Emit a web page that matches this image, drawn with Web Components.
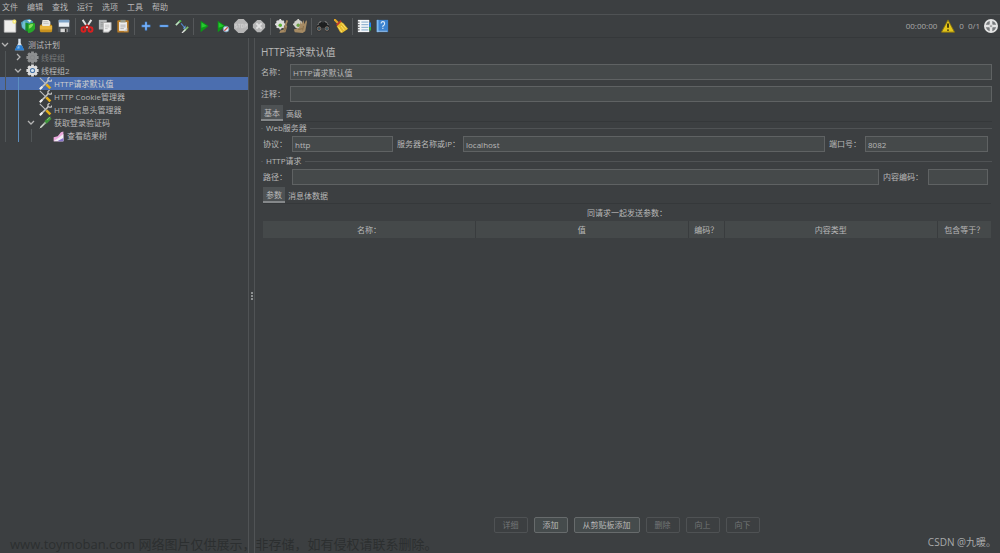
<!DOCTYPE html>
<html lang="zh-CN">
<head>
<meta charset="utf-8">
<title>HTTP请求默认值</title>
<style>
body{margin:0;background:#3c3f41;color:#b8b8b8;font:8px/12px "Open Sans","Noto Sans CJK SC",sans-serif;
--field:#45494a;--edge:#5f6263;--line:#505355;--dark:#35383a}
</style>
</head>
<body>
<jm-app></jm-app>
<script>
const define=(name,html,setup)=>{
  const t=document.createElement('template');
  t.innerHTML='<style>*{box-sizing:border-box}button,input{font:inherit;color:inherit;margin:0}</style>'+html;
  customElements.define(name,class extends HTMLElement{
    connectedCallback(){
      if(this.shadowRoot)return;
      this.attachShadow({mode:'open'}).append(t.content.cloneNode(true));
      if(setup)setup(this,this.shadowRoot);
    }
  });
};

const gear=(c,hole,mid)=>`<g fill="${c}"><circle cx="8" cy="8" r="6"/><path d="M6.3 .5h3.400v15H6.300zM.5 6.300h15v3.400H.5z"/><path d="M6.300 .5h3.400v15H6.300zM.5 6.300h15v3.400H.5z" transform="rotate(45 8 8)"/></g><circle cx="8" cy="8" r="3.200" fill="${hole}"/><circle cx="8" cy="8" r="1.900" fill="${mid}"/>`;
const ICONS={
 new:'<path d="M1.500 1.500h13v13.500h-13z" fill="#efefed" stroke="#c8c8c8"/><circle cx="13" cy="3" r="2.300" fill="#f3e56b"/><circle cx="13" cy="3" r="1" fill="#fffbd0"/>',
 templates:'<path d="M0 4l4-3 6-1 4 3-1 5-8 5-4-3z" fill="#4e9fc0"/><path d="M3 2l3 2 1 5-3 3-3-4z" fill="#73bfd0"/><path d="M5 4l4 1v10l-4-2z" fill="#198c28"/><path d="M8 6q4-3 8-1v6q-3 5-8 5z" fill="#27a929"/><path d="M9 7q3-2 5-1-1 4-5 5z" fill="#83e05a"/><path d="M7 1l3 3 2-3" fill="#e8f1dc"/>',
 open:'<path d="M4 1l7 0 2 2v5H3z" fill="#e9e7de"/><path d="M5 3h5M5 5h6" stroke="#bbb"/><path d="M1 7l2-1 1 2h8l1-2 2 1v7l-1 1H2l-1-1z" fill="#c8911e"/><path d="M1 8h14v4H1z" fill="#e9b53b"/>',
 save:'<path d="M1 2h14v13H1z" fill="#41464c"/><path d="M2 1h12v8H2z" fill="#e9eef4"/><path d="M2 1h12v3H2z" fill="#7fa5ca"/><path d="M1 9h14v6H1z" fill="#4b5056"/><path d="M4 11h8v4H4z" fill="#d6d6d6"/><path d="M9 11h2v4H9z" fill="#333"/>',
 cut:'<path d="M3 1l6 9M13 1L7 10" stroke="#e0e0e0" stroke-width="2.200"/><path d="M5 9l3-2 3 2" stroke="#b01818" stroke-width="2" fill="none"/><g fill="none" stroke="#d92020" stroke-width="2.300"><ellipse cx="4" cy="12" rx="2.200" ry="2.600"/><ellipse cx="12" cy="12" rx="2.200" ry="2.600"/></g>',
 copy:'<path d="M1 1h9v11H1z" fill="#b5b8b9"/><path d="M3 4h5M3 6h5M3 8h5" stroke="#929596"/><path d="M6 4h9v8l-3 3H6z" fill="#f0f0f0" stroke="#aaa"/><path d="M8 7h5M8 9h5M8 11h3" stroke="#bbb"/>',
 paste:'<rect x="1.500" y="1.500" width="13" height="14" rx="1" fill="#b67b28"/><path d="M3.500 3.500h9v10h-9z" fill="#eee"/><path d="M5 7h6M5 9h6M5 11h4" stroke="#aaa"/><path d="M5 1h6v3H5z" fill="#999b89"/><path d="M9 14l4-4v4z" fill="#cacaca"/>',
 plus:'<path d="M8 3v10M3 8h10" stroke="#4e8fe2" stroke-width="2.600"/><path d="M8 4v8M4 8h8" stroke="#8cc0fb"/>',
 minus:'<path d="M3 8h10" stroke="#4e8fe2" stroke-width="2.600"/><path d="M4 8h8" stroke="#8cc0fb"/>',
 toggle:'<path d="M1 7l5-5" stroke="#bde4c0" stroke-width="2"/><path d="M5 3l2-1" stroke="#43b849" stroke-width="2"/><path d="M7 5l4 5" stroke="#5386cc" stroke-width="1.300"/><path d="M12 7v4H9z" fill="#6ba4e9"/><path d="M10 14l5-5" stroke="#7fbf70" stroke-width="2"/><path d="M8 16l4-4" stroke="#ddd" stroke-width="1.500"/>',
 play:'<path d="M3 2l9 6-9 7z" fill="#0b9816"/><path d="M4 4l6 4-6 2z" fill="#28c931"/>',
 playno:'<path d="M2 2l9 6-9 7z" fill="#0b9816"/><path d="M3 4l6 4-6 2z" fill="#28c931"/><circle cx="11.500" cy="11.500" r="3.300" fill="#ddeaf2" stroke="#7098b5"/><path d="M9.500 13.500l4-4" stroke="#d04a4a" stroke-width="1.500"/>',
 stop:'<path d="M5 0h6l5 5v6l-5 5H5l-5-5V5z" fill="#b5b5b5"/><path d="M3.500 6h-2v2h2v2h-2M4.500 6h3M6 6v4M8.500 6h2v4h-2zM12.500 10V6h2v2h-2" fill="none" stroke="#d6d6d6" stroke-width=".8"/>',
 shut:'<path d="M6 1h4l5 5v4l-5 5H6l-5-5V6z" fill="#b5b5b5"/><path d="M5 5l6 6M11 5l-6 6" stroke="#e1e1e1" stroke-width="2.200"/>',
 clear:'<circle cx="6" cy="6" r="5" fill="#ddd"/><path d="M5 0h2v12H5zM0 5h12v2H0z" fill="#ddd"/><path d="M2 2l8 8M10 2l-8 8" stroke="#ddd" stroke-width="2"/><circle cx="6" cy="7" r="2" fill="#5bae32"/><path d="M13 1l2 1-2 5 1 1-2 7-7 1 1-3 4-1 1-5z" fill="#a48861"/><path d="M9 11l3-1-1 4" stroke="#7d6645" fill="none"/>',
 clearall:'<circle cx="6" cy="6" r="5" fill="#d0d0ca"/><path d="M5 0h2v12H5zM0 5h12v2H0z" fill="#d0d0ca"/><circle cx="6" cy="7" r="2" fill="#6a9f42"/><path d="M9 2l1 4 2-5 1 5 2-5 1 2-2 11-3 2-9-1-1-3 6-2z" fill="#a58a63"/><path d="M6 12l5-1M12 8l-1 5" stroke="#846b48" fill="none"/>',
 find:'<path d="M3 3h4l1 2 1-2h4l3 8-2 3h-3l-2-4H7l-2 4H2l-2-3z" fill="#1d1f20"/><path d="M3 4l3-1M10 3l3 1M2 7l1-2M14 7l-1-2" stroke="#a0a0a0"/><g fill="#3c5a66" stroke="#8a7466"><circle cx="3.500" cy="11" r="2.200"/><circle cx="12.500" cy="11" r="2.200"/></g>',
 broom:'<path d="M0 0l5 5" stroke="#e0a526" stroke-width="2.500"/><path d="M3 8l5-5 3 2 5 6-1 1-6 4-2-1z" fill="#e6ba29"/><path d="M3 7l5-5" stroke="#c2342b" stroke-width="2"/><path d="M5 9l4 6M8 8l4 5M9 5l5 6" stroke="#fae47c"/>',
 list:'<path d="M1 1h13v14H1z" fill="#f4f6f8"/><path d="M1 3.500h2M1 6.500h2M1 9.500h2M1 12.500h2" stroke="#333"/><path d="M5 3.500h8M5 6.500h8M5 9.500h8M5 12.500h8" stroke="#6f9cc4"/><path d="M14 4h2v5h-2z" fill="#2584ed"/><path d="M14 9h2v4h-2z" fill="#34b242"/>',
 help:'<path d="M2 1h13v14H2z" fill="#3c83cf"/><path d="M2 1h2v14H2z" fill="#7eb8ed"/><path d="M3 14h11" stroke="#a9c5e0"/><path d="M7 5q0-2 2-2t2 2-2 3v1M9 10v1.500" fill="none" stroke="#dcebfa" stroke-width="1.200"/>',
 warn:'<path d="M8 1l7.500 14H.5z" fill="#e4c51a" stroke="#88730f"/><path d="M8 5v5M8 12v1.500" stroke="#342d08" stroke-width="2"/>',
 threads:'<circle cx="8" cy="8" r="7" fill="#777a7c" stroke="#e2e2e2" stroke-width="2"/><path d="M8 1v5M8 10v5M1 8h5M10 8h5" stroke="#e4e4e4" stroke-width="3"/><circle cx="8" cy="8" r="2.500" fill="#ddd"/><circle cx="8" cy="8" r="1" fill="#888"/>',
 flask:'<path d="M6.500 1h3v5l4 9h-11l4-9z" fill="#d9e4ed"/><path d="M5 9h6l3 6H2z" fill="#2b7fd3"/><path d="M6 10h2v3H5z" fill="#85bdef"/>',
 gearoff:gear('#8d8f90','#858788','#8d8f90'),
 gear:gear('#dedede','#4372a7','#d9e6ef'),
 tools:'<path d="M2 14L12 4" stroke="#c7c7c7" stroke-width="1.800"/><path d="M11 5V2l2-2M12 5h3l1-2" stroke="#c7c7c7" stroke-width="1.500" fill="none"/><path d="M1 1l8 8" stroke="#bcbcbc" stroke-width="1.400"/><path d="M9 9l5 5" stroke="#e4ae18" stroke-width="3.200"/><path d="M1 15l3-3" stroke="#eee" stroke-width="2.500"/>',
 dropper:'<path d="M2 14l8-8" stroke="#aab9a8" stroke-width="2.400"/><path d="M1 15l5-5" stroke="#e2e2e2"/><path d="M8 8l6-6" stroke="#3f963c" stroke-width="4"/><path d="M10 5l4-4" stroke="#98d283"/>',
 chart:'<path d="M2 15v-5l5-1 4-5 3-1v12z" fill="#eaa9dd"/><path d="M2 15l7-5 5-4v9z" fill="#f2edf6"/><path d="M8 14l6-3v4H7z" fill="#8574c9"/>'
};
const svg=n=>`<svg viewBox="0 0 16 16" aria-hidden="true">${ICONS[n]}</svg>`;

define('jm-icon','<style>:host{display:block;flex:none;width:14px;height:14px}span,svg{display:block;width:100%;height:100%}</style><span></span>',
 (h,r)=>r.querySelector('span').innerHTML=svg(h.getAttribute('name')));

define('jm-menubar',`<style>:host{display:block;border-bottom:1px solid #4f5254}nav{display:flex;height:14px;padding-left:2px;gap:9px}
button{border:0;background:none;padding:0;line-height:14px}</style>
<nav><button>文件</button><button>编辑</button><button>查找</button><button>运行</button><button>选项</button><button>工具</button><button>帮助</button></nav>`);

define('jm-toolbar',`<style>:host{display:flex;align-items:center;height:23px;box-sizing:border-box;padding:0 2px 0 1px;border-bottom:1px solid var(--dark)}
button{width:18px;height:18px;border:0;background:none;padding:2px}i{width:1px;height:17px;background:#55585a;margin:0 2px}
.b{display:flex;align-items:center}.s{margin-left:auto;display:flex;align-items:center;gap:4px;color:#aaa}</style>
<div class="b"></div><div class="s"><span>00:00:00</span><jm-icon name="warn"></jm-icon><span>0</span><span>0/1</span><jm-icon name="threads"></jm-icon></div>`,
 (h,r)=>{
  const groups=[[['new','新建'],['templates','模板'],['open','打开'],['save','保存']],[['cut','剪切'],['copy','复制'],['paste','粘贴']],[['plus','展开'],['minus','折叠'],['toggle','切换']],[['play','启动'],['playno','无间隔启动'],['stop','停止'],['shut','关闭']],[['clear','清除'],['clearall','清除全部']],[['find','搜索'],['broom','重置搜索']],[['list','函数助手'],['help','帮助']]];
  r.querySelector('.b').innerHTML=groups.map(g=>g.map(([n,l])=>`<button aria-label="${l}"><jm-icon name="${n}"></jm-icon></button>`).join('')).join('<i></i>');
 });

define('jm-node',`<style>:host{display:flex;height:13px;line-height:13px;white-space:nowrap}:host([selected]){background:#4b6eaf;color:#d0d0d0}:host([off]){color:#777a7b}
.gs{display:flex}.g,.c{width:13px;flex:none}.g::before{content:"";display:block;width:1px;height:13px;margin-left:5px;background:#515658}.g.hot::before{background:#5c8fc0}
.c svg{display:block;width:13px;height:13px}.n{width:15px;flex:none}jm-icon{width:13px;height:13px}</style>
<span class="gs"></span><span class="c"></span><span class="n"></span><slot></slot>`,
 (h,r)=>{
  const d=+h.getAttribute('depth'),s=h.getAttribute('state');
  r.querySelector('.gs').innerHTML=Array.from({length:d},(_,k)=>`<span class="g${k===1?' hot':''}"></span>`).join('');
  if(s)r.querySelector('.c').innerHTML=`<svg viewBox="0 0 13 13"><path d="${s==='open'?'M2 5l3 3 3-3':'M4 3l3 3-3 3'}" fill="none" stroke="#b5b5b5" stroke-width="1.300"/></svg>`;
  r.querySelector('.n').innerHTML=`<jm-icon name="${h.getAttribute('icon')}"></jm-icon>`;
 });

define('jm-tree',`<style>:host{display:block}</style>
<jm-node depth="0" state="open" icon="flask">测试计划</jm-node>
<jm-node depth="1" state="closed" icon="gearoff" off>线程组</jm-node>
<jm-node depth="1" state="open" icon="gear">线程组2</jm-node>
<jm-node depth="2" icon="tools" selected>HTTP请求默认值</jm-node>
<jm-node depth="2" icon="tools">HTTP Cookie管理器</jm-node>
<jm-node depth="2" icon="tools">HTTP信息头管理器</jm-node>
<jm-node depth="2" state="open" icon="dropper">获取登录验证码</jm-node>
<jm-node depth="3" icon="chart">查看结果树</jm-node>`);

define('jm-field',`<style>:host{display:flex;align-items:center;min-width:0}label{flex:none;width:var(--label,29px);white-space:nowrap}
input{flex:1;min-width:0;width:0;height:16px;padding:0 2px;border:1px solid var(--edge);background:var(--field);outline:0}</style>
<label for="f"></label><input id="f" type="text">`,
 (h,r)=>{r.querySelector('label').textContent=h.getAttribute('label');r.querySelector('input').value=h.getAttribute('value')||'';});

define('jm-tabs',`<style>:host{display:flex;height:17px;border-bottom:1px solid var(--dark)}button{border:0;background:none;padding:0 3px;line-height:15px}
button.on{background:#4e5254;border-bottom:2px solid #85888a}</style>`,
 (h,r)=>h.getAttribute('items').split(',').forEach((t,i)=>{const b=document.createElement('button');b.textContent=t;if(!i)b.className='on';r.append(b);}));

define('jm-group',`<style>:host{display:block}fieldset{margin:0;padding:2px 4px 0 2px;border:0;border-top:1px solid var(--line);min-width:0}
legend{padding:0 3px;height:12px}</style><fieldset><legend></legend><slot></slot></fieldset>`,
 (h,r)=>r.querySelector('legend').textContent=h.getAttribute('label'));

define('jm-params',`<style>:host{display:block}table{width:100%;border-collapse:collapse;table-layout:fixed}caption{height:17px;line-height:18px;text-align:center}
th{font-weight:400;height:17px;padding:0;background:var(--field);border-right:1px solid #393c3e}th:last-child{border:0}
col.w{width:29.2%}col.s{width:5%}</style>
<table><caption>同请求一起发送参数：</caption><colgroup><col class="w"><col class="w"><col class="s"><col class="w"><col></colgroup>
<thead><tr><th>名称：</th><th>值</th><th>编码？</th><th>内容类型</th><th>包含等于？</th></tr></thead><tbody></tbody></table>`);

define('jm-actions',`<style>:host{display:flex;justify-content:center;gap:6px}button{height:16px;padding:0 8px;border:1px solid #676b6c;border-radius:2px;background:#454b4c;line-height:14px;white-space:nowrap}
button:disabled{background:none;border-color:#4f5254;color:#737677}</style>
<button disabled>详细</button><button>添加</button><button>从剪贴板添加</button><button disabled>删除</button><button disabled>向上</button><button disabled>向下</button>`);

define('jm-config',`<style>:host{display:flex;flex-direction:column;padding:7px 8px 20px 6px}h1{margin:0 0 5px;font-size:10px;font-weight:400;line-height:14px}
.top{display:grid;gap:6px;margin-bottom:3px}.row{display:flex;gap:4px}.row jm-field{flex:1 1 0}
.in{padding:2px 1px 0 2px}jm-group+jm-group{margin-top:3px}
.row .p{flex:101 1 29px}.row .h{--label:66px;flex:362 1 66px}.row .o{--label:36px;flex:123 1 36px}
.row .r{flex:588 1 29px}.row .e{--label:45px;flex:60 1 45px}jm-actions{margin-top:auto}</style>
<h1>HTTP请求默认值</h1>
<div class="top"><jm-field label="名称：" value="HTTP请求默认值"></jm-field><jm-field label="注释："></jm-field></div>
<jm-tabs items="基本,高级"></jm-tabs>
<jm-group label="Web服务器"><div class="row"><jm-field class="p" label="协议：" value="http"></jm-field><jm-field class="h" label="服务器名称或IP：" value="localhost"></jm-field><jm-field class="o" label="端口号：" value="8082"></jm-field></div></jm-group>
<jm-group label="HTTP请求"><div class="row"><jm-field class="r" label="路径："></jm-field><jm-field class="e" label="内容编码："></jm-field></div></jm-group>
<div class="in"><jm-tabs items="参数,消息体数据"></jm-tabs><jm-params></jm-params></div>
<jm-actions></jm-actions>`);

define('jm-app',`<style>:host{display:flex;flex-direction:column;min-height:100vh;position:relative}
main{flex:1;display:grid;grid-template-columns:25% 1fr}
aside{display:flex;padding-right:1px}jm-tree{flex:1;border-right:1px solid var(--line)}
.grip{width:5px;flex:none;margin-right:-5px;display:flex;flex-direction:column;justify-content:center;align-items:center;gap:1px}
.grip i{width:2px;height:2px;background:#8d9091}
jm-config{margin-left:4px;border-left:1px solid var(--line)}
.mark,.sign{position:absolute;pointer-events:none;white-space:nowrap}.mark{left:10px;bottom:0;color:#2c2f30;font-size:13px;line-height:18px}
.sign{right:4px;bottom:3px;color:#a8aaab;font-size:10px;line-height:16px}</style>
<jm-menubar></jm-menubar><jm-toolbar></jm-toolbar>
<main><aside><jm-tree></jm-tree><div class="grip"><i></i><i></i><i></i></div></aside><jm-config></jm-config></main>
<div class="mark">www.toymoban.com 网络图片仅供展示，非存储，如有侵权请联系删除。</div><div class="sign">CSDN @九暖。</div>`);
</script>
</body>
</html>
